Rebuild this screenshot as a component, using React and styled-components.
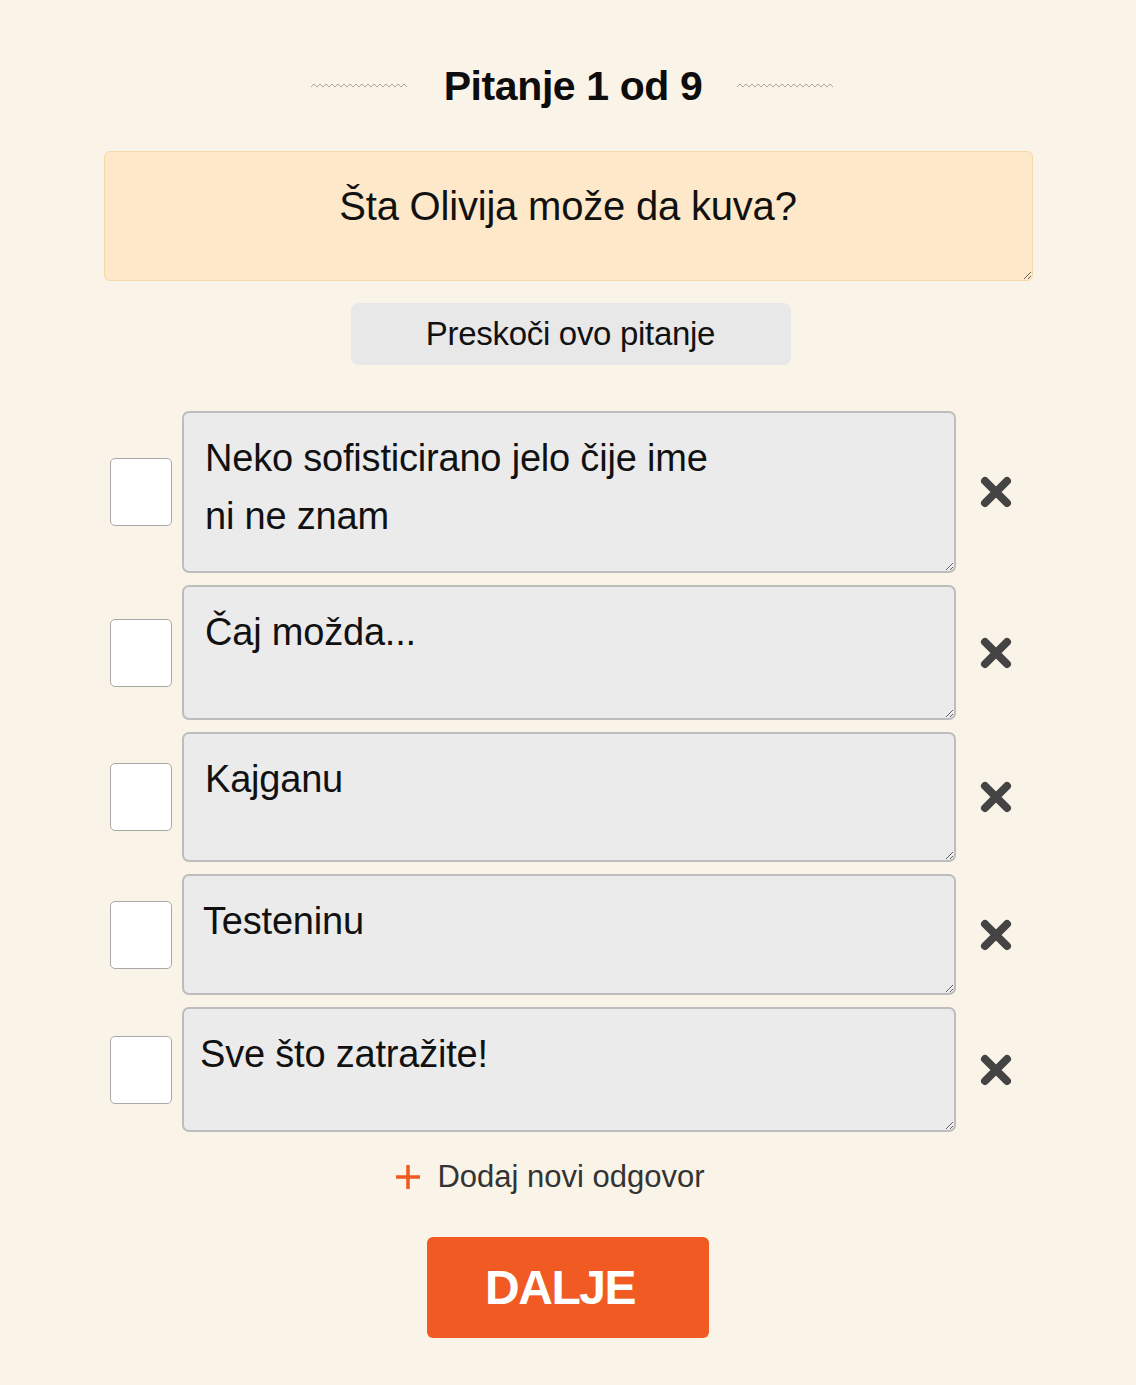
import React from 'react'
import styled, { createGlobalStyle } from 'styled-components'

const GlobalStyle = createGlobalStyle`
  html, body {
    margin: 0;
    background: #faf3e8;
  }
  body {
    font-family: "Liberation Sans", Arial, sans-serif;
    color: #111;
  }
`

const answers = [
  { text: 'Neko sofisticirano jelo čije ime\nni ne znam', height: 162, pad: 21 },
  { text: 'Čaj možda...', height: 135, pad: 21 },
  { text: 'Kajganu', height: 130, pad: 21 },
  { text: 'Testeninu', height: 121, pad: 19 },
  { text: 'Sve što zatražite!', height: 125, pad: 16 },
]

const Wave = () => (
  <svg width="98" height="6" viewBox="0 0 98 6">
    <polyline
      fill="none"
      stroke="#aca79f"
      strokeWidth="1"
      points={Array.from({ length: 33 }, (_, i) => `${i * 3},${i % 2 ? 1 : 4}`).join(' ')}
    />
  </svg>
)

const CloseIcon = () => (
  <svg width="34" height="34" viewBox="0 0 34 34">
    <path d="M6 6 L28 28 M28 6 L6 28" stroke="#444" strokeWidth="8" strokeLinecap="round" />
  </svg>
)

const PlusIcon = () => (
  <svg width="26" height="26" viewBox="0 0 26 26">
    <path d="M13 1 V25 M1 13 H25" stroke="#f05a1e" strokeWidth="3.5" />
  </svg>
)

const App = () => {
  return (
    <Page>
      <GlobalStyle />
      <Header>
        <Wave />
        <Title>Pitanje 1 od 9</Title>
        <Wave />
      </Header>

      <QuestionField readOnly value="Šta Olivija može da kuva?" />

      <SkipButton>Preskoči ovo pitanje</SkipButton>

      <AnswerList>
        {answers.map((a, i) => (
          <AnswerRow key={i}>
            <Check />
            <AnswerField readOnly value={a.text} $h={a.height} $pad={a.pad} />
            <RemoveButton aria-label="Ukloni">
              <CloseIcon />
            </RemoveButton>
          </AnswerRow>
        ))}
      </AnswerList>

      <AddLink>
        <PlusIcon />
        <span>Dodaj novi odgovor</span>
      </AddLink>

      <NextButton>DALJE</NextButton>
    </Page>
  )
}

export default App

const Page = styled.div`
  display: flex;
  flex-direction: column;
  align-items: center;
  padding: 58px 0 47px;
`

const Header = styled.div`
  display: flex;
  align-items: center;
  gap: 35px;
  height: 56px;
  margin-left: 10px;
`

const Title = styled.h1`
  margin: 0;
  font-size: 41px;
  font-weight: 700;
  letter-spacing: -0.4px;
  color: #0d0d0d;
`

const QuestionField = styled.textarea`
  box-sizing: border-box;
  margin-top: 37px;
  width: 929px;
  height: 130px;
  padding: 31px 20px 0;
  background: #fde8c9;
  border: 1px solid #f6d9aa;
  border-radius: 6px;
  font-family: inherit;
  font-size: 40px;
  line-height: 46px;
  letter-spacing: -0.2px;
  text-align: center;
  color: #111;
  outline: none;
`

const SkipButton = styled.button`
  margin-top: 22px;
  margin-left: 5px;
  width: 440px;
  height: 62px;
  background: #e8e8e8;
  border: none;
  border-radius: 8px;
  font-family: inherit;
  font-size: 33px;
  letter-spacing: -0.3px;
  color: #111;
`

const AnswerList = styled.div`
  margin-top: 46px;
  display: flex;
  flex-direction: column;
  gap: 12px;
`

const AnswerRow = styled.div`
  display: grid;
  grid-template-columns: 62px 774px 60px;
  column-gap: 10px;
  align-items: center;
`

const Check = styled.div`
  box-sizing: border-box;
  width: 62px;
  height: 68px;
  background: #fff;
  border: 1.5px solid #a9a9a9;
  border-radius: 5px;
`

const AnswerField = styled.textarea`
  box-sizing: border-box;
  width: 774px;
  height: ${p => p.$h}px;
  padding: 16px 21px 0 ${p => p.$pad}px;
  background: #ebebeb;
  border: 2px solid #bdbdbd;
  border-radius: 7px;
  font-family: inherit;
  font-size: 38px;
  line-height: 58px;
  letter-spacing: -0.2px;
  color: #111;
  outline: none;
`

const RemoveButton = styled.button`
  display: flex;
  justify-content: center;
  align-items: center;
  padding: 0;
  background: none;
  border: none;
`

const AddLink = styled.div`
  margin-top: 27px;
  margin-right: 36px;
  display: flex;
  align-items: center;
  gap: 16px;
  font-size: 31px;
  color: #333;
`

const NextButton = styled.button`
  margin-top: 42px;
  width: 282px;
  height: 101px;
  padding: 0 16px 0 0;
  background: #f15a22;
  border: none;
  border-radius: 6px;
  font-family: inherit;
  font-size: 48px;
  font-weight: 700;
  letter-spacing: -1.5px;
  color: #fff;
`
